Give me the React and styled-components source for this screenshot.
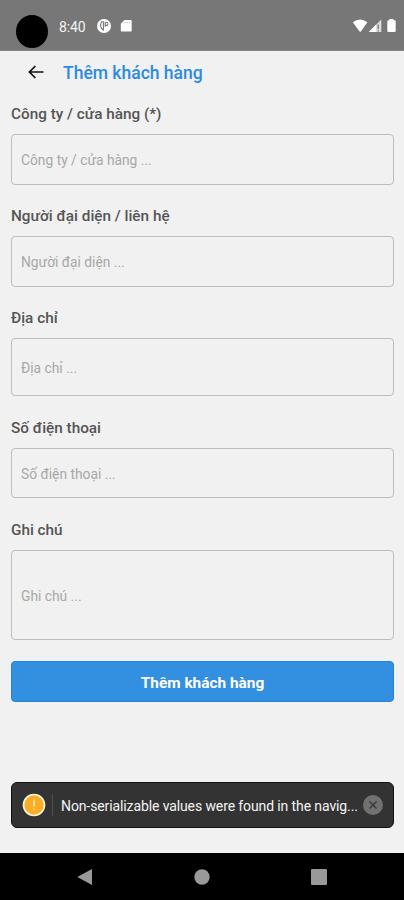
import React from "react";
import styled, { createGlobalStyle } from "styled-components";

const fields = [
  { label: "Công ty / cửa hàng (*)", hint: "Công ty / cửa hàng ...", height: 51, gap: 21 },
  { label: "Người đại diện / liên hệ", hint: "Người đại diện ...", height: 51, gap: 21 },
  { label: "Địa chỉ", hint: "Địa chỉ ...", height: 58, gap: 22 },
  { label: "Số điện thoại", hint: "Số điện thoại ...", height: 50, gap: 22 },
  { label: "Ghi chú", hint: "Ghi chú ...", height: 90, gap: 21 },
];

export default function App() {
  return (
    <Screen>
      <GlobalStyle />
      <StatusBar>
        <Camera />
        <Time>8:40</Time>
        <NoticeIcons width="36" height="16" viewBox="0 0 36 16">
          <circle cx="7" cy="8" r="7" fill="#fff" />
          <path d="M6.4 3.8H4.6Q3.4 5.6 3.6 8.2q.4 2.6 2.8 3.8ZM8.2 8.8V4.3h1.6q1.2.3 1.2 1.6T9.8 7.4H8.2" fill="none" stroke="#777" strokeWidth="1.1" />
          <path d="M27.5 2h6.2q1 0 1 1v9.5q0 1-1 1h-8.9q-1 0-1-1V5.7Z" fill="#fff" />
          <path d="M28 4v1.2M30.3 4v1.2M32.5 4v1.2" stroke="#bbb" />
        </NoticeIcons>
        <SignalIcons width="46" height="16" viewBox="0 0 46 16">
          <path d="M0.8 4.3Q8-1.5 15.4 4.3L8.9 13.4Q8.2 14 7.6 13.4Z" fill="#fff" />
          <path d="M16.8 14 29.3 1.5V14Z" fill="#ddd" />
          <path d="M16.8 14 24 6.8V14Z" fill="#fff" />
          <path d="M26.2 6.5v4.8M26.2 12.2v1.3" stroke="#777" strokeWidth="1.3" />
          <path d="M37.5 1h4v1.2h1q1.2 0 1.2 1.2v9.4q0 1.2-1.2 1.2h-6q-1.2 0-1.2-1.2V3.4q0-1.2 1.2-1.2h1Z" fill="#fff" />
        </SignalIcons>
      </StatusBar>
      <Header>
        <BackButton aria-label="Back">
          <svg width="16" height="14" viewBox="0 0 16 14" fill="none" stroke="#111" strokeWidth="1.7">
            <path d="M15.5 7H1.6M7.4 1 1.4 7l6 6" />
          </svg>
        </BackButton>
        <Title>Thêm khách hàng</Title>
      </Header>
      <Form>
        {fields.map((field) => (
          <Field key={field.label} $gap={field.gap}>
            <Label>{field.label}</Label>
            <Input placeholder={field.hint} $height={field.height} />
          </Field>
        ))}
        <Submit type="button">Thêm khách hàng</Submit>
      </Form>
      <Toast>
        <svg width="24" height="24" viewBox="0 0 24 24">
          <circle cx="12" cy="12" r="10.5" fill="#fbad26" stroke="#fff4dc" strokeWidth="1.7" />
          <path d="M12 6.5v7M12 15.5v1.8" stroke="#ffe9bd" strokeWidth="1.5" />
        </svg>
        <Divider />
        <Message>Non-serializable values were found in the navig...</Message>
        <svg width="20" height="20" viewBox="0 0 20 20">
          <circle cx="10" cy="10" r="10" fill="#717171" />
          <path d="m6.5 6.5 7 7m0-7-7 7" stroke="#373737" strokeWidth="1.4" />
        </svg>
      </Toast>
      <NavBar>
        <svg width="16" height="18" viewBox="0 0 16 18">
          <path d="M0.3 9 15 1v16Z" fill="#999" />
        </svg>
        <svg width="16" height="18" viewBox="0 0 16 18">
          <circle cx="8" cy="9" r="7.7" fill="#999" />
        </svg>
        <svg width="16" height="18" viewBox="0 0 16 18">
          <rect x="0" y="1" width="16" height="16" rx="1" fill="#999" />
        </svg>
      </NavBar>
    </Screen>
  );
}

const GlobalStyle = createGlobalStyle`
  * {
    box-sizing: border-box;
  }
  body {
    margin: 0;
    font-family: Roboto, sans-serif;
  }
`;

const Screen = styled.div`
  display: flex;
  flex-direction: column;
  height: 900px;
  overflow: hidden;
  background: #f1f1f1;
`;

const StatusBar = styled.div`
  display: flex;
  align-items: flex-start;
  flex: none;
  height: 51px;
  padding: 0 6px 0 16px;
  background: #777;
  border-bottom: 1px solid #858585;
`;

const Camera = styled.div`
  width: 32px;
  height: 33px;
  margin-top: 15px;
  border-radius: 50%;
  background: #000;
`;

const Time = styled.span`
  width: 27px;
  margin: 18px 11px 0 11px;
  font-size: 14px;
  line-height: 18px;
  letter-spacing: -0.1px;
  white-space: nowrap;
  color: #f4f4f4;
`;

const NoticeIcons = styled.svg`
  margin-top: 18px;
`;

const SignalIcons = styled.svg`
  margin: 18px 0 0 auto;
`;

const Header = styled.header`
  display: flex;
  align-items: center;
  flex: none;
  height: 43px;
  padding-left: 28px;
`;

const BackButton = styled.button`
  display: flex;
  width: 35px;
  padding: 0 0 2px;
  border: none;
  background: none;
`;

const Title = styled.h1`
  margin: 1px 0 0;
  font-size: 17.5px;
  font-weight: 500;
  line-height: 22px;
  white-space: nowrap;
  color: #2c8be0;
`;

const Form = styled.form`
  display: flex;
  flex-direction: column;
  flex: 1;
  padding: 10px 10px 0 11px;
`;

const Field = styled.label`
  display: flex;
  flex-direction: column;
  margin-bottom: ${(props) => props.$gap}px;
`;

const Label = styled.span`
  height: 20px;
  margin-bottom: 10px;
  font-size: 15.3px;
  font-weight: 500;
  line-height: 20px;
  color: #555;
`;

const Input = styled.input`
  width: 100%;
  height: ${(props) => props.$height}px;
  padding: 1px 9px 0;
  border: 1px solid #bdbdbd;
  border-radius: 4px;
  outline: none;
  background: transparent;
  font-family: inherit;
  font-size: 13.8px;
  &::placeholder {
    color: #a8a8a8;
    opacity: 1;
  }
`;

const Submit = styled.button`
  height: 41px;
  padding: 2px 0 0;
  border: 1px solid #2383d6;
  border-radius: 4px;
  background: #338fe0;
  font-family: inherit;
  font-size: 15.4px;
  font-weight: 700;
  color: #fff;
`;

const Toast = styled.div`
  display: flex;
  align-items: center;
  flex: none;
  height: 46px;
  margin: 0 10px 25px 11px;
  padding: 0 10px;
  border: 1px solid #111;
  border-radius: 6px;
  background: #333;
`;

const Divider = styled.div`
  width: 1px;
  height: 22px;
  margin: 0 8px 0 6px;
  background: #505050;
`;

const Message = styled.span`
  flex: 1;
  margin-top: 2px;
  font-size: 14px;
  line-height: 20px;
  letter-spacing: -0.11px;
  white-space: nowrap;
  color: #f4f4f4;
`;

const NavBar = styled.nav`
  display: flex;
  justify-content: space-between;
  align-items: center;
  flex: none;
  height: 47px;
  padding: 0 77px;
  background: #000;
`;
